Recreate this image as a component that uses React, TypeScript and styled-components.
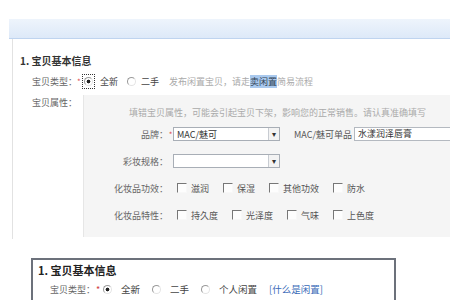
import styled, { createGlobalStyle } from 'styled-components';

const GlobalStyle = createGlobalStyle`
  html, body {
    margin: 0;
    background: #ffffff;
  }
  body {
    font-family: "Noto Sans CJK SC", "Noto Sans", sans-serif;
    color: #555;
  }
`;

const effects = ['滋润', '保湿', '其他功效', '防水'];
const features = ['持久度', '光泽度', '气味', '上色度'];

function App() {
  return (
    <>
      <GlobalStyle />
      <Page>
        <Band />
        <Section>
          <Title>1. 宝贝基本信息</Title>
          <TypeRow>
            <Label>宝贝类型：</Label>
            <Star>*</Star>
            <Focus>
              <Radio checked />
            </Focus>
            <OptionText>全新</OptionText>
            <Radio />
            <OptionText>二手</OptionText>
            <Note>
              发布闲置宝贝，请走<Mark>卖闲置</Mark>简易流程
            </Note>
          </TypeRow>
          <AttrRow>
            <AttrLabel>宝贝属性：</AttrLabel>
            <Panel>
              <Hint>填错宝贝属性，可能会引起宝贝下架，影响您的正常销售。请认真准确填写</Hint>
              <FieldRow>
                <FieldLabel>品牌：</FieldLabel>
                <FieldStar>*</FieldStar>
                <Select>
                  <span>MAC/魅可</span>
                  <Arrow>▾</Arrow>
                </Select>
                <SubLabel>MAC/魅可单品</SubLabel>
                <Input>水漾润泽唇膏</Input>
              </FieldRow>
              <FieldRow>
                <FieldLabel>彩妆规格：</FieldLabel>
                <FieldStar />
                <Select>
                  <span />
                  <Arrow>▾</Arrow>
                </Select>
              </FieldRow>
              <FieldRow>
                <FieldLabel>化妆品功效：</FieldLabel>
                <FieldStar />
                <Checks gap={14}>
                  {effects.map((e) => (
                    <CheckItem key={e}>
                      <Checkbox />
                      {e}
                    </CheckItem>
                  ))}
                </Checks>
              </FieldRow>
              <FieldRow>
                <FieldLabel>化妆品特性：</FieldLabel>
                <FieldStar />
                <Checks gap={14}>
                  {features.map((f) => (
                    <CheckItem key={f}>
                      <Checkbox />
                      {f}
                    </CheckItem>
                  ))}
                </Checks>
              </FieldRow>
            </Panel>
          </AttrRow>
        </Section>
        <Box>
          <BoxTitle>1. 宝贝基本信息</BoxTitle>
          <BoxRow>
            <BoxLabel>宝贝类型：</BoxLabel>
            <BoxStar>*</BoxStar>
            <Radio checked />
            <BoxOption>全新</BoxOption>
            <Radio />
            <BoxOption>二手</BoxOption>
            <Radio />
            <BoxOption>个人闲置</BoxOption>
            <Link>[什么是闲置]</Link>
          </BoxRow>
        </Box>
      </Page>
    </>
  );
}
export default App;

const Page = styled.div`
  width: 450px;
  height: 300px;
  overflow: hidden;
  padding-top: 19px;
  box-sizing: border-box;
`;

const Band = styled.div`
  margin-left: 9px;
  height: 19px;
  background: linear-gradient(#eef4fc, #dde9f8);
  border-bottom: 1px solid #bfd4ef;
`;

const Section = styled.div`
  margin-left: 12px;
  height: 200px;
  border-left: 1px solid #e2e2e2;
  display: flex;
  flex-direction: column;
`;

const Title = styled.div`
  margin-top: 15px;
  padding-left: 7px;
  height: 14px;
  line-height: 14px;
  font-size: 10px;
  font-weight: bold;
  color: #333;
`;

const TypeRow = styled.div`
  margin-top: 6px;
  padding-left: 19px;
  height: 14px;
  display: flex;
  align-items: center;
  font-size: 9px;
  white-space: nowrap;
`;

const Label = styled.span`
  width: 45px;
  flex-shrink: 0;
  color: #666;
`;

const Star = styled.span`
  width: 5px;
  flex-shrink: 0;
  color: #e05050;
  font-size: 8px;
`;

const Focus = styled.span`
  display: inline-flex;
  padding: 2px 1px;
  border: 1px dotted #333;
`;

const Radio = styled.span<{ checked?: boolean }>`
  width: 7px;
  height: 7px;
  border-radius: 50%;
  border: 1px solid #9a9a9a;
  border-right-color: #e4e4e4;
  border-bottom-color: #e4e4e4;
  background: ${({ checked }) => (checked ? 'radial-gradient(circle, #222 0 1.6px, #fff 2.2px)' : '#fff')};
  flex-shrink: 0;
`;

const OptionText = styled.span`
  margin-left: 5px;
  margin-right: 9px;
  color: #444;
`;

const Note = styled.span`
  margin-left: 1px;
  color: #aaa;
`;

const Mark = styled.span`
  background: #a9c9ee;
  color: #345;
`;

const AttrRow = styled.div`
  margin-top: 7px;
  display: flex;
  flex: 1;
  min-height: 0;
`;

const AttrLabel = styled.div`
  width: 51px;
  flex-shrink: 0;
  padding-left: 19px;
  padding-top: 1px;
  font-size: 9px;
  line-height: 14px;
  color: #666;
  white-space: nowrap;
`;

const Panel = styled.div`
  flex: 1;
  min-width: 0;
  height: 142px;
  overflow: hidden;
  background: #f5f5f5;
  border-left: 1px solid #e6e6e6;
  display: flex;
  flex-direction: column;
  gap: 11px;
  font-size: 9px;
`;

const Hint = styled.div`
  margin-top: 11px;
  margin-bottom: -5px;
  padding-left: 45px;
  line-height: 14px;
  color: #aaa;
  white-space: nowrap;
`;

const FieldRow = styled.div`
  height: 16px;
  display: flex;
  align-items: center;
  white-space: nowrap;
  & > * {
    flex-shrink: 0;
  }
`;

const FieldLabel = styled.span`
  width: 84px;
  text-align: right;
  color: #666;
`;

const FieldStar = styled.span`
  width: 5px;
  color: #e05050;
  font-size: 8px;
  text-align: center;
`;

const Select = styled.div`
  width: 107px;
  height: 14px;
  box-sizing: border-box;
  background: #fff;
  border: 1px solid #a8aeb6;
  display: flex;
  align-items: center;
  justify-content: space-between;
  padding-left: 3px;
  color: #333;
`;

const Arrow = styled.span`
  width: 10px;
  height: 12px;
  border-left: 1px solid #c8ccd2;
  background: #f3f3f3;
  font-size: 8px;
  line-height: 12px;
  text-align: center;
  color: #333;
`;

const SubLabel = styled.span`
  margin-left: 14px;
  margin-right: 2px;
  color: #555;
`;

const Input = styled.div`
  width: 120px;
  height: 14px;
  box-sizing: border-box;
  background: #fff;
  border: 1px solid #b4b9c0;
  padding-left: 3px;
  line-height: 12px;
  color: #333;
`;

const Checks = styled.div<{ gap: number }>`
  margin-left: 4px;
  display: flex;
  gap: ${({ gap }) => gap}px;
`;

const CheckItem = styled.span`
  display: flex;
  align-items: center;
  gap: 4px;
  color: #555;
`;

const Checkbox = styled.span`
  width: 8px;
  height: 8px;
  border-top: 1px solid #777;
  border-left: 1px solid #777;
  border-right: 1px solid #f8f8f8;
  border-bottom: 1px solid #f8f8f8;
  background: #fdfdfd;
`;

const Box = styled.div`
  margin-top: 19px;
  margin-left: 31px;
  width: 365px;
  height: 60px;
  border: 2px solid #6c717b;
  box-sizing: border-box;
`;

const BoxTitle = styled.div`
  margin-top: 2px;
  padding-left: 5px;
  line-height: 16px;
  font-size: 11px;
  font-weight: bold;
  color: #222;
`;

const BoxRow = styled.div`
  margin-top: 3px;
  padding-left: 17px;
  height: 16px;
  display: flex;
  align-items: center;
  font-size: 9.5px;
  white-space: nowrap;
  & > * {
    flex-shrink: 0;
  }
`;

const BoxLabel = styled.span`
  width: 46px;
  font-size: 9px;
  color: #666;
`;

const BoxStar = styled.span`
  width: 7px;
  color: #d04040;
  font-size: 9px;
`;

const BoxOption = styled.span`
  margin-left: 9px;
  margin-right: 12px;
  color: #444;
`;

const Link = styled.span`
  color: #3a6bb8;
`;
